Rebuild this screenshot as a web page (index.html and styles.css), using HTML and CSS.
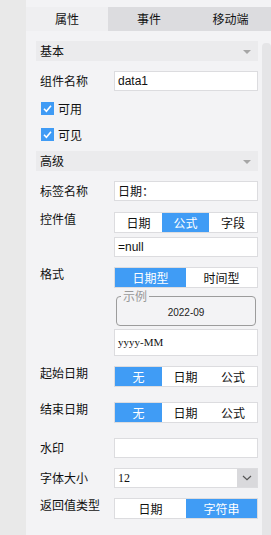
FILE: index.html
```html
<!DOCTYPE html>
<html lang="zh-CN">
<head>
    <meta charset="UTF-8">
    <title>日期控件属性</title>
    <link rel="stylesheet" href="styles.css">
</head>
<body>
    <div class="page">
        <div class="side"></div>
        <div class="panel">
            <div class="tabs">
                <div class="tab active">属性</div>
                <div class="tab">事件</div>
                <div class="tab">移动端</div>
            </div>
            <div class="body">
                <div class="content">
                    <div class="group-head">基本<span class="tri"></span></div>

                    <div class="row r-name">
                        <label>组件名称</label>
                        <div class="input sans">data1</div>
                    </div>
                    <div class="check c1"><span class="box"><svg viewBox="0 0 13 13" width="13" height="13"><path d="M3 6.8 L5.4 9.2 L10 3.8" fill="none" stroke="#fff" stroke-width="1.6"/></svg></span>可用</div>
                    <div class="check c2"><span class="box"><svg viewBox="0 0 13 13" width="13" height="13"><path d="M3 6.8 L5.4 9.2 L10 3.8" fill="none" stroke="#fff" stroke-width="1.6"/></svg></span>可见</div>

                    <div class="group-head g2">高级<span class="tri"></span></div>

                    <div class="row r-label">
                        <label>标签名称</label>
                        <div class="input">日期：</div>
                    </div>

                    <div class="row top r-value">
                        <label>控件值</label>
                        <div class="ctrl">
                            <div class="seg three">
                                <span>日期</span><span class="on">公式</span><span>字段</span>
                            </div>
                            <div class="input sans null">=null</div>
                        </div>
                    </div>

                    <div class="row top r-format">
                        <label>格式</label>
                        <div class="ctrl">
                            <div class="seg two">
                                <span class="on">日期型</span><span>时间型</span>
                            </div>
                            <div class="sample">
                                <span class="legend">示例</span>
                                2022-09
                            </div>
                            <div class="input serif tall">yyyy-MM</div>
                        </div>
                    </div>

                    <div class="row top r-start">
                        <label>起始日期</label>
                        <div class="seg three">
                            <span class="on">无</span><span>日期</span><span>公式</span>
                        </div>
                    </div>

                    <div class="row top r-end">
                        <label>结束日期</label>
                        <div class="seg three">
                            <span class="on">无</span><span>日期</span><span>公式</span>
                        </div>
                    </div>

                    <div class="row r-mark">
                        <label>水印</label>
                        <div class="input"></div>
                    </div>

                    <div class="row r-size">
                        <label>字体大小</label>
                        <div class="select">
                            <span class="val">12</span>
                            <span class="arrow"><svg viewBox="0 0 10 6" width="10" height="6"><path d="M1 1 L5 4.6 L9 1" fill="none" stroke="#555" stroke-width="1.2"/></svg></span>
                        </div>
                    </div>

                    <div class="row top r-return">
                        <label>返回值类型</label>
                        <div class="seg two">
                            <span>日期</span><span class="on">字符串</span>
                        </div>
                    </div>
                </div>
                <div class="scroll"></div>
            </div>
        </div>
    </div>
</body>
</html>
```

FILE: styles.css
```css
*{margin:0; padding:0; box-sizing:border-box;}
body{
    font-family: "Noto Sans CJK SC", "Liberation Sans", sans-serif;
    font-size: 12px;
    color: #111;
    background: #f3f3f5;
}
.page{
    display: flex;
    width: 271px;
    height: 535px;
    overflow: hidden;
}
.side{
    width: 26px;
    background: #e9e9e9;
}
.panel{
    flex: 1;
    display: flex;
    flex-direction: column;
    padding-top: 7px;
    background: #f3f3f5;
}
.tabs{
    display: grid;
    grid-template-columns: 82px 82px 1fr;
    height: 24px;
    background: #dcdcdf;
}
.tab{
    line-height: 24px;
    text-align: center;
    font-size: 12px;
}
.tab.active{
    background: #efeff1;
}
.body{
    flex: 1;
    display: flex;
    padding-top: 10px;
}
.content{
    width: 222px;
    margin-left: 10px;
}
.scroll{
    width: 9px;
    margin-left: 4px;
    margin-top: 2px;
    background: #e5e5e7;
    border-radius: 4px 4px 0 0;
}

.group-head{
    display: flex;
    justify-content: space-between;
    align-items: center;
    height: 20px;
    padding: 0 7px 0 4px;
    background: #ebebed;
    line-height: 20px;
}
.group-head.g2{margin-top: 10px;}
.tri{
    width: 0;
    height: 0;
    border-left: 4px solid transparent;
    border-right: 4px solid transparent;
    border-top: 4px solid #a6a6a6;
    margin-top: 2px;
}

.row{
    display: flex;
    align-items: flex-start;
}
.row label{
    width: 78px;
    padding-left: 4px;
    line-height: 20px;
    flex: none;
}
.row.top label{
    line-height: 14px;
}
.ctrl{
    width: 144px;
}

.r-name{margin-top: 10px;}
.r-label{margin-top: 10px;}
.r-value{margin-top: 11px;}
.r-format{margin-top: 10px;}
.r-start{margin-top: 10px;}
.r-end{margin-top: 15px;}
.r-mark{margin-top: 15px;}
.r-size{margin-top: 10px;}
.r-return{margin-top: 10px;}

.input{
    width: 144px;
    height: 20px;
    padding-left: 3px;
    line-height: 18px;
    background: #fff;
    border: 1px solid #dcdcdf;
}
.input.sans{
    font-family: "Liberation Sans", Arial, sans-serif;
}
.input.serif{
    font-family: "Liberation Serif", serif;
    font-size: 11px;
}
.input.null{margin-top: 4px;}
.input.tall{
    height: 27px;
    margin-top: 3px;
    line-height: 25px;
}

.check{
    display: flex;
    align-items: center;
    height: 13px;
    padding-left: 5px;
    line-height: 13px;
}
.check.c1{margin-top: 11px;}
.check.c2{margin-top: 13px;}
.check .box{
    width: 13px;
    height: 13px;
    margin-right: 4px;
    background: #3f9bf5;
}
.check svg{display: block;}

.seg{
    display: grid;
    width: 144px;
    height: 21px;
    background: #fff;
    border: 1px solid #dcdcdf;
}
.seg.three{grid-template-columns: 47px 47px 1fr;}
.seg.two{grid-template-columns: 71px 1fr;}
.seg span{
    text-align: center;
    line-height: 19px;
}
.seg span.on{
    background: #409cf5;
    color: #fff;
}

.sample{
    position: relative;
    width: 140px;
    height: 30px;
    margin: 8px 0 0 2px;
    padding-top: 10px;
    border: 1px solid #9c9c9c;
    border-radius: 4px;
    text-align: center;
    font-family: "Liberation Sans", Arial, sans-serif;
    font-size: 10px;
    line-height: 12px;
    color: #222;
}
.sample .legend{
    position: absolute;
    left: 4px;
    top: -7px;
    padding: 0 2px;
    background: #f3f3f5;
    color: #999;
    font-family: "Noto Sans CJK SC", sans-serif;
    font-size: 12px;
    line-height: 12px;
}

.select{
    display: flex;
    width: 144px;
    height: 20px;
    background: #fff;
    border: 1px solid #dcdcdf;
}
.select .val{
    flex: 1;
    padding-left: 3px;
    line-height: 18px;
    font-family: "Liberation Serif", serif;
}
.select .arrow{
    display: flex;
    align-items: center;
    justify-content: center;
    width: 20px;
    background: #d9d9dc;
}
.select svg{display: block;}
```
